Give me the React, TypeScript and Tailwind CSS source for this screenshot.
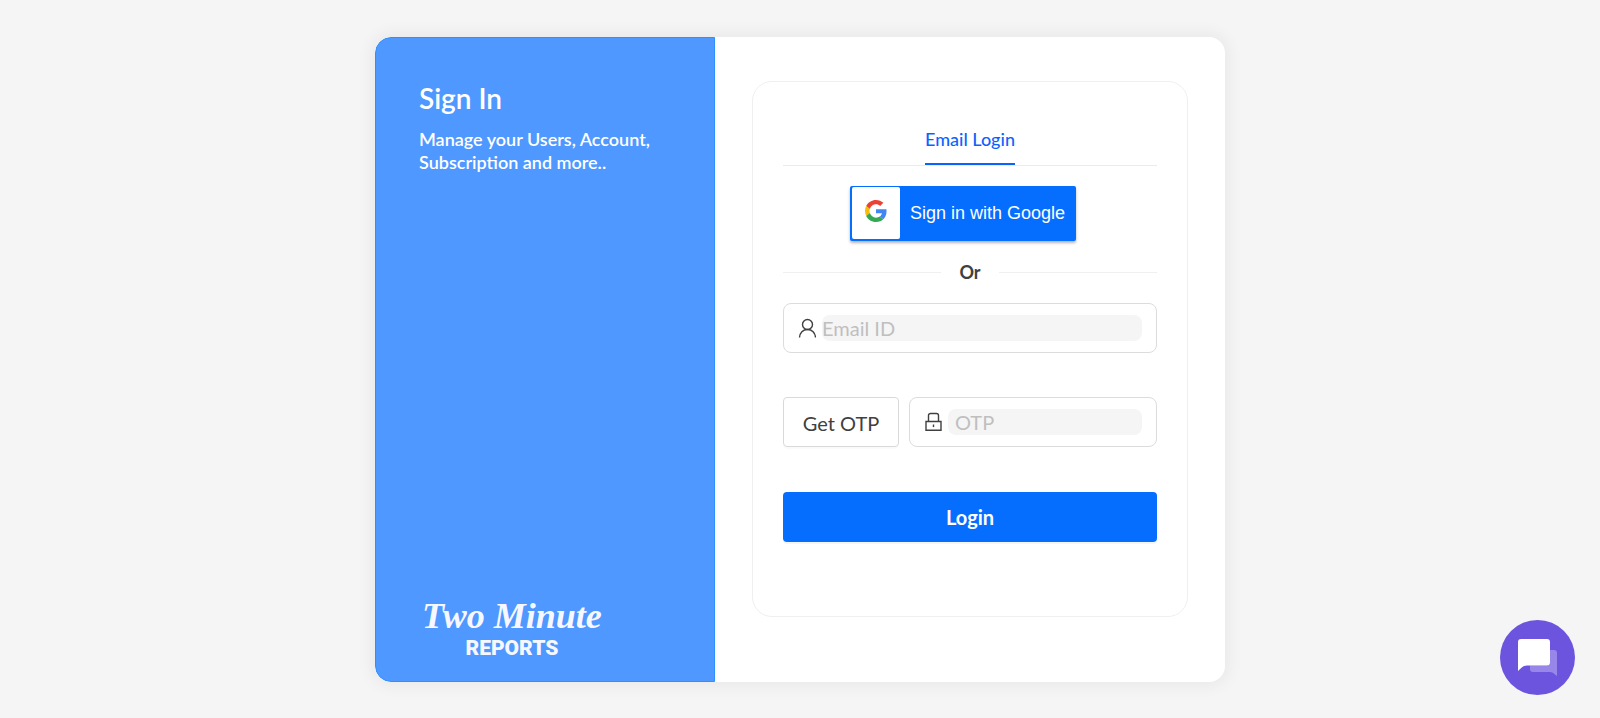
import { useState } from 'react';
import type { ReactNode } from 'react';

const GoogleIcon = () => (
  <svg viewBox="0 0 48 48" className="h-[22px] w-[22px]" aria-hidden="true">
    <path
      fill="#EA4335"
      d="M24 9.5c3.54 0 6.71 1.22 9.21 3.6l6.85-6.85C35.9 2.38 30.47 0 24 0 14.62 0 6.51 5.38 2.56 13.22l7.98 6.19C12.43 13.72 17.74 9.5 24 9.5z"
    />
    <path
      fill="#4285F4"
      d="M46.98 24.55c0-1.57-.15-3.09-.38-4.55H24v9.02h12.94c-.58 2.96-2.26 5.48-4.78 7.18l7.73 6c4.51-4.18 7.09-10.36 7.09-17.65z"
    />
    <path
      fill="#FBBC05"
      d="M10.53 28.59c-.48-1.45-.76-2.99-.76-4.59s.27-3.14.76-4.59l-7.98-6.19C.92 16.46 0 20.12 0 24c0 3.88.92 7.54 2.56 10.78l7.97-6.19z"
    />
    <path
      fill="#34A853"
      d="M24 48c6.48 0 11.93-2.13 15.89-5.81l-7.73-6c-2.15 1.45-4.92 2.3-8.16 2.3-6.26 0-11.57-4.22-13.47-9.91l-7.98 6.19C6.51 42.62 14.62 48 24 48z"
    />
  </svg>
);

const UserIcon = () => (
  <svg viewBox="0 0 18 20" className="h-5 w-[18px] shrink-0" fill="none" stroke="#404040" strokeWidth="1.4" aria-hidden="true">
    <circle cx="9.500" cy="6.500" r="5" />
    <path d="M1.500 19.500c.3-4.600 3.400-8 8-8s7.700 3.400 8 8" />
  </svg>
);

const LockIcon = () => (
  <svg viewBox="0 0 18 20" className="h-5 w-[18px] shrink-0" fill="none" stroke="#404040" strokeWidth="1.4" aria-hidden="true">
    <path d="M2 9.500h15v8.700H2z" />
    <path d="M4.500 9.500v-6a2 2 0 0 1 2-2h6a2 2 0 0 1 2 2v6" />
    <path d="M9.500 12.500v2.600" />
  </svg>
);

const ChatIcon = () => (
  <svg viewBox="0 0 75 75" className="h-full w-full" aria-hidden="true">
    <path
      fill="#fff"
      fillOpacity="0.3"
      d="M50 30h4a3 3 0 0 1 3 3v23c-2-1-3.500-4-7-4H33a3 3 0 0 1-3-3v-3.500h17a3 3 0 0 0 3-3z"
    />
    <path
      fill="#fff"
      d="M21 19h26a3 3 0 0 1 3 3v20.500a3 3 0 0 1-3 3H27c-4.500 0-6.500 3.500-9 5.500V22a3 3 0 0 1 3-3z"
    />
  </svg>
);

const Field = ({ className, children }: { className: string; children: ReactNode }) => (
  <div className={`flex h-[50px] items-center gap-[6px] rounded-lg border border-[#dcdcdc] px-[14px] ${className}`}>
    {children}
  </div>
);

const inputStyle =
  'h-[26px] min-w-0 flex-1 rounded-lg bg-[#f5f5f5] text-xl text-[#404040] outline-none placeholder:text-[#bfbfbf]';

const App = () => {
  const [email, setEmail] = useState('');
  const [otp, setOtp] = useState('');

  return (
    <div className="flex min-h-screen items-start justify-center bg-[#f5f5f5] py-[37px] font-['Lato',sans-serif] text-[#404040]">
      <main className="flex w-full max-w-[850px] overflow-hidden rounded-2xl bg-white shadow-[0_0_16px_4px_rgba(0,0,0,0.05)]">
        {/* Left panel */}
        <section className="flex w-2/5 flex-col justify-between rounded-l-2xl border border-[#2f8fff] bg-[#4f98ff] px-[43px] pb-4 pt-11 text-white">
          <div>
            <h1 className="text-[28px] font-semibold leading-8">Sign In</h1>
            <p className="mt-[14px] text-lg font-semibold leading-[23px]">
              Manage your Users, Account, Subscription and more..
            </p>
          </div>
          <svg viewBox="0 0 184 70" className="h-[70px] w-[184px]" role="img" aria-label="Two Minute Reports">
            <text x="3" y="33" fill="#f7f7ff" fontFamily="Liberation Serif, serif" fontStyle="italic" fontWeight="700" fontSize="36">
              Two Minute
            </text>
            <text x="93" y="60" fill="#f7f7ff" fontFamily="Roboto, sans-serif" fontWeight="900" fontSize="21" textAnchor="middle">
              REPORTS
            </text>
          </svg>
        </section>

        {/* Right panel */}
        <section className="w-3/5 px-[37px] pb-[65px] pt-11">
          <form
            className="rounded-[20px] border border-[#efefef] px-[30px] pb-[74px] pt-10"
            onSubmit={(e) => e.preventDefault()}
          >
            <div className="flex justify-center border-b border-[#ebebeb]">
              <button type="button" className="h-[43px] border-b-2 border-[#0b63ff] pb-2 text-lg font-medium text-[#0b63ff]">
                Email Login
              </button>
            </div>

            <div className="mt-5 flex justify-center pr-[14px]">
              <button
                type="button"
                className="flex h-[55px] w-[226px] items-center rounded-xs bg-[#056eff] p-px pb-[2px] pl-[2px] font-['Liberation_Sans',sans-serif] text-lg text-white shadow-[0_2px_3px_rgba(0,0,0,0.3)]"
              >
                <span className="flex h-full w-12 shrink-0 items-center justify-center rounded-xs bg-white pb-1">
                  <GoogleIcon />
                </span>
                <span className="flex-1 text-center">Sign in with Google</span>
              </button>
            </div>

            <div className="mt-5 flex items-center gap-[18px]">
              <div className="h-px flex-1 bg-[#f0f0f0]"></div>
              <span className="text-lg font-bold leading-[22px]">Or</span>
              <div className="h-px flex-1 bg-[#f0f0f0]"></div>
            </div>

            <Field className="mt-5">
              <UserIcon />
              <input
                type="email"
                aria-label="Email ID"
                placeholder="Email ID"
                value={email}
                onChange={(e) => setEmail(e.target.value)}
                className={inputStyle}
              />
            </Field>

            <div className="mt-11 flex gap-[10px]">
              <button
                type="button"
                className="h-[50px] w-[116px] shrink-0 rounded border border-[#d9d9d9] pt-[2px] text-xl shadow-[0_2px_0_rgba(0,0,0,0.02)]"
              >
                Get OTP
              </button>
              <Field className="min-w-0 flex-1">
                <LockIcon />
                <input
                  type="text"
                  aria-label="OTP"
                  placeholder="OTP"
                  value={otp}
                  onChange={(e) => setOtp(e.target.value)}
                  className={`${inputStyle} pl-[7px]`}
                />
              </Field>
            </div>

            <button
              type="submit"
              className="mt-[45px] h-[50px] w-full rounded bg-[#056eff] text-xl font-bold text-white shadow-[0_2px_0_rgba(0,0,0,0.04)]"
            >
              Login
            </button>
          </form>
        </section>
      </main>

      {/* Chat launcher */}
      <button
        type="button"
        aria-label="Open chat"
        className="fixed bottom-[23px] right-[25px] h-[75px] w-[75px] rounded-full bg-[#6c54de]"
      >
        <ChatIcon />
      </button>
    </div>
  );
};

export default App;
